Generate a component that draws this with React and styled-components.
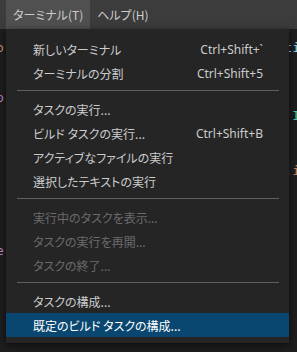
import styled, { createGlobalStyle } from "styled-components";

const GlobalStyle = createGlobalStyle`
  html, body {
    margin: 0;
    padding: 0;
    background: #1e1e1e;
  }
  body {
    font-family: "Noto Sans CJK JP", "Noto Sans", sans-serif;
    width: 297px;
    height: 352px;
    overflow: hidden;
  }
`;

const menuItems = [
  [
    { label: "新しいターミナル", shortcut: "Ctrl+Shift+`" },
    { label: "ターミナルの分割", shortcut: "Ctrl+Shift+5" },
  ],
  [
    { label: "タスクの実行..." },
    { label: "ビルド タスクの実行...", shortcut: "Ctrl+Shift+B" },
    { label: "アクティブなファイルの実行" },
    { label: "選択したテキストの実行" },
  ],
  [
    { label: "実行中のタスクを表示...", disabled: true },
    { label: "タスクの実行を再開...", disabled: true },
    { label: "タスクの終了...", disabled: true },
  ],
  [
    { label: "タスクの構成..." },
    { label: "既定のビルド タスクの構成...", active: true },
  ],
];

// code peeking out on both sides of the open menu
const codeLines = [
  { h: 50, left: "o", leftColor: "#ce9178", right: "ti", rightColor: "#9cdcfe" },
  { h: 18, left: "p", leftColor: "#c586c0", right: "" },
  { h: 55, left: "", right: "I", rightColor: "#4ec9b0" },
  { h: 80, left: "", right: ".i", rightColor: "#ce9178" },
  { h: 20, left: "e", leftColor: "#c586c0", right: "" },
];

function App() {
  return (
    <Screen>
      <GlobalStyle />
      <MenuBar>
        <BarItem $open>ターミナル(T)</BarItem>
        <BarItem>ヘルプ(H)</BarItem>
      </MenuBar>
      <Editor>
        {codeLines.map((line, i) => (
          <CodeLine key={i} $h={line.h}>
            <Frag $color={line.leftColor}>{line.left}</Frag>
            <Frag $color={line.rightColor}>{line.right}</Frag>
          </CodeLine>
        ))}
      </Editor>
      <Menu>
        {menuItems.map((group, gi) => (
          <Group key={gi}>
            {gi > 0 && <Separator />}
            {group.map((item) => (
              <Item key={item.label} $disabled={item.disabled} $active={item.active}>
                <span>{item.label}</span>
                {item.shortcut && <Shortcut>{item.shortcut}</Shortcut>}
              </Item>
            ))}
          </Group>
        ))}
      </Menu>
    </Screen>
  );
}

const Screen = styled.div`
  position: relative;
  width: 297px;
  height: 352px;
  background: #1e1e1e;
  overflow: hidden;
  font-size: 12px;
  font-feature-settings: "palt";
`;

const MenuBar = styled.div`
  display: flex;
  height: 29px;
  padding-left: 6px;
  background: #3c3c3c;
`;

const BarItem = styled.div`
  display: flex;
  align-items: center;
  padding: 0 7px;
  color: #cccccc;
  background: ${(p) => (p.$open ? "#505050" : "transparent")};
`;

const Editor = styled.div`
  display: flex;
  flex-direction: column;
  padding-top: 10px;
  font-family: "DejaVu Sans Mono", monospace;
  font-size: 13px;
`;

const CodeLine = styled.div`
  display: flex;
  justify-content: space-between;
  align-items: flex-start;
  height: ${(p) => p.$h}px;
  line-height: 17px;
  margin: 0 -3px 0 -4px;
`;

const Frag = styled.span`
  color: ${(p) => p.$color || "#d4d4d4"};
`;

const Menu = styled.div`
  position: absolute;
  top: 29px;
  left: 6px;
  width: 283px;
  padding: 8px 0 6px;
  background: #252526;
  box-shadow: 0 2px 8px rgba(0, 0, 0, 0.6);
  color: #cccccc;
`;

const Group = styled.div`
  display: flex;
  flex-direction: column;
`;

const Separator = styled.div`
  height: 1px;
  margin: 5px 10px 6px 11px;
  background: #606060;
`;

const Item = styled.div`
  display: flex;
  align-items: center;
  justify-content: space-between;
  height: 24px;
  padding: 0 26px 0 27px;
  color: ${(p) => (p.$disabled ? "#6b6b6b" : p.$active ? "#ffffff" : "#cccccc")};
  background: ${(p) => (p.$active ? "#094771" : "transparent")};
`;

const Shortcut = styled.span`
  font-family: "Noto Sans", sans-serif;
  font-feature-settings: normal;
`;

export default App;
